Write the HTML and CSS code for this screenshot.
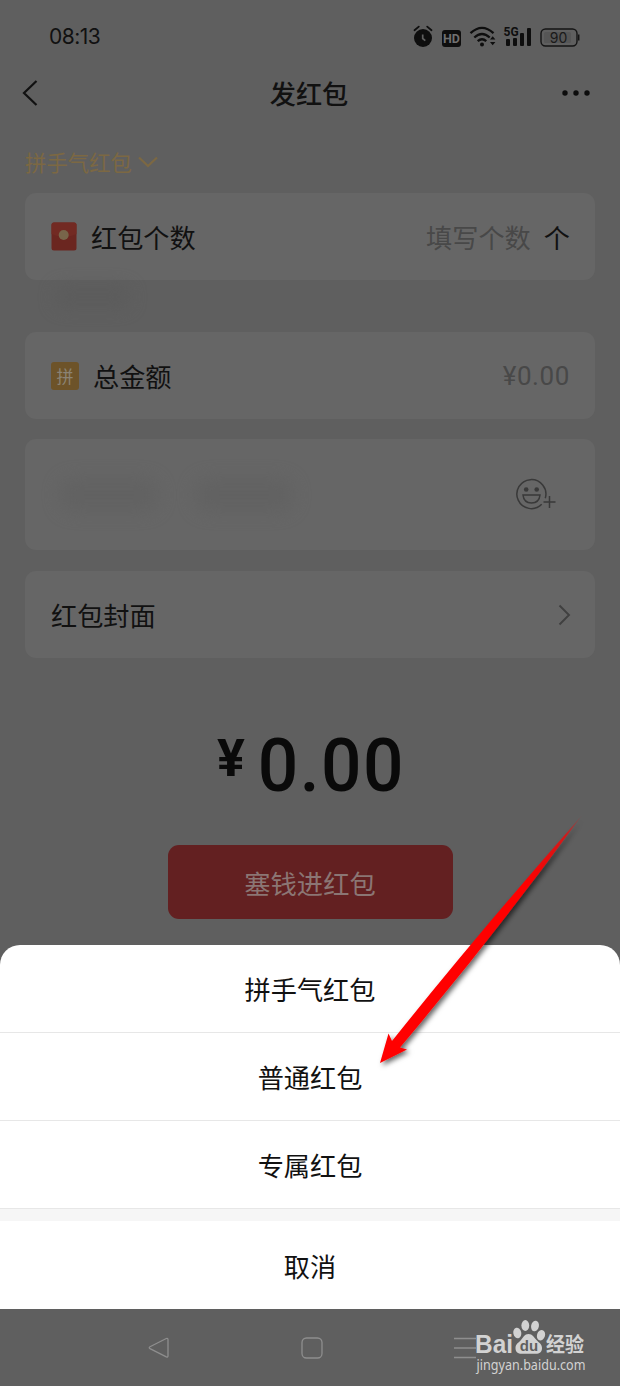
FILE: index.html
```html
<!DOCTYPE html>
<html lang="zh-CN">
<head>
<meta charset="utf-8">
<title>发红包</title>
<link rel="stylesheet" href="styles.css">
</head>
<body>
<div class="screen">
  <main class="page">
    <div class="status">
      <span class="time">08:13</span>
      <svg class="status-icons" width="170" height="26" viewBox="0 0 170 26">
        <g fill="#0e0e0e">
          <circle cx="13" cy="14" r="9"/>
          <path d="M4.5 6.2 8.8 2.6M21.5 6.2 17.200 2.600" stroke="#0e0e0e" stroke-width="1.8" stroke-linecap="round"/>
          <path d="M12.700 10.500v4l2.600 2.200" fill="none" stroke="#606060" stroke-width="1.700"/>
          <rect x="32" y="6" width="19" height="17" rx="3"/>
          <path d="M60.500 9.200Q72-1.500 83.500 9.200M64.300 13.500q7.700-7 15.400 0M67.700 17.200q4.300-3.800 8.600 0" fill="none" stroke="#0e0e0e" stroke-width="2.300"/>
          <circle cx="72" cy="20.500" r="2"/>
          <path d="M80 15.500l2.700-3.300 2.700 3.300zM80 18l2.700 3.300 2.700-3.300z"/>
          <rect x="96" y="15" width="4" height="7" rx="1"/>
          <rect x="103" y="14" width="4" height="8" rx="1"/>
          <rect x="110" y="9" width="4" height="13" rx="1"/>
          <rect x="117" y="4" width="4" height="18" rx="1"/>
        </g>
        <rect x="131" y="5" width="36" height="17" rx="4.500" fill="none" stroke="#141414" stroke-width="1.400"/>
        <rect x="134" y="8" width="27" height="11" rx="1.500" fill="#565656"/>
        <path d="M168.700 10.500v6" stroke="#141414" stroke-width="1.500"/>
        <text class="hd" x="41.500" y="18.800" text-anchor="middle">HD</text>
        <text class="five" x="93.500" y="12">5G</text>
        <text class="batt" x="148.500" y="18.600" text-anchor="middle">90</text>
      </svg>
    </div>
    <header class="nav">
      <svg width="18" height="28" viewBox="0 0 18 28"><path d="M15.500 2 3 14 15.500 26" fill="none" stroke="#111" stroke-width="2.200"/></svg>
      <h1 class="title">发红包</h1>
      <svg width="30" height="8" viewBox="0 0 30 8" fill="#0c0c0c"><circle cx="4" cy="4" r="2.700"/><circle cx="15" cy="4" r="2.700"/><circle cx="26" cy="4" r="2.700"/></svg>
    </header>
    <div class="kind">
      <span>拼手气红包</span>
      <svg width="20" height="12" viewBox="0 0 20 12"><path d="M1 1.500 10 10 19 1.500" fill="none" stroke="#7c6843" stroke-width="2.200"/></svg>
    </div>
    <section class="card count">
      <svg width="26" height="29" viewBox="0 0 26 29"><rect x=".5" y=".5" width="25" height="28" rx="2.500" fill="#6b2620"/><path d="M.5 12V3Q.5.500 3 .5h20q2.500 0 2.500 2.500v9q-12.500 6-25 0z" fill="#722a23"/><circle cx="12.700" cy="13" r="5" fill="#78654a"/></svg>
      <span class="label">红包个数</span>
      <span class="hint">填写个数</span>
      <span class="unit">个</span>
    </section>
    <div class="smudge smudge-small"></div>
    <section class="card total">
      <span class="badge">拼</span>
      <span class="label">总金额</span>
      <span class="hint money">¥0.00</span>
    </section>
    <section class="card message">
      <div class="smudges"><div class="smudge"></div><div class="smudge"></div></div>
      <svg width="42" height="34" viewBox="0 0 42 34" fill="none" stroke="#393939" stroke-width="1.500"><path d="M30.300 20.200A14.500 14.500 0 1 0 26.700 26.300"/><circle cx="11.200" cy="11.500" r="2.300" fill="#393939" stroke="none"/><circle cx="21.700" cy="11.500" r="2.300" fill="#393939" stroke="none"/><path d="M8 17h17q-.8 8-8.500 8T8 17zM34.500 18v12M28.500 24h12"/></svg>
    </section>
    <section class="card cover">
      <span class="label">红包封面</span>
      <svg width="13" height="22" viewBox="0 0 13 22"><path d="M1.500 1.500 11 11 1.500 20.500" fill="none" stroke="#404040" stroke-width="1.900"/></svg>
    </section>
    <div class="amount"><span class="yen">¥</span><span class="digits">0.00</span></div>
    <div class="pay">塞钱进红包</div>
  </main>
  <section class="sheet">
    <div class="option">拼手气红包</div>
    <div class="option">普通红包</div>
    <div class="option">专属红包</div>
    <div class="gap"></div>
    <div class="option cancel">取消</div>
  </section>
  <footer class="keys">
    <svg width="22" height="22" viewBox="0 0 22 22"><path d="M18.300 1.500 2 9.700q-1.500 1 0 2l16.300 8.200q1.700.6 1.700-1.200V2.700q0-1.700-1.700-1.200z" fill="none" stroke="#8e8e8e" stroke-width="1.300"/></svg>
    <svg width="22" height="22" viewBox="0 0 22 22"><rect x="1" y="1" width="20" height="20" rx="4.500" fill="none" stroke="#8e8e8e" stroke-width="1.300"/></svg>
    <svg width="22" height="22" viewBox="0 0 22 22"><path d="M0 1.500h22M0 11h22M0 20.500h22" stroke="#8e8e8e" stroke-width="1.400"/></svg>
  </footer>
  <svg class="arrow" width="240" height="280" viewBox="0 0 240 280">
    <defs>
      <linearGradient id="fade" gradientUnits="userSpaceOnUse" x1="222" y1="14" x2="165" y2="84"><stop offset="0" stop-color="#f00" stop-opacity="0"/><stop offset=".3" stop-color="#f00" stop-opacity=".7"/><stop offset="1" stop-color="#f00"/></linearGradient>
      <filter id="shade" x="-20%" y="-20%" width="140%" height="140%"><feDropShadow dx="2.500" dy="2.500" stdDeviation="2.500" flood-color="#000" flood-opacity=".6"/></filter>
    </defs>
    <path d="M20 263 28.500 233.500 32 241 Q120 131 223 14 Q134 136 40 247.500 L47 249.500Z" fill="url(#fade)" filter="url(#shade)"/>
  </svg>
  <svg class="mark" width="124" height="60" viewBox="0 0 124 60" fill="#d2d2d2">
    <text class="bai" x="1" y="36" textLength="38" lengthAdjust="spacingAndGlyphs">Bai</text>
    <ellipse cx="43.300" cy="16" rx="4" ry="5.300" transform="rotate(-12 43.300 16)"/>
    <ellipse cx="51.300" cy="8.500" rx="3.900" ry="5.400"/>
    <ellipse cx="61" cy="9" rx="3.900" ry="5.400" transform="rotate(12 61 9)"/>
    <ellipse cx="67" cy="18.300" rx="4" ry="5.300" transform="rotate(18 67 18.300)"/>
    <path d="M54.500 17c4 0 5.500 3.300 8 6 2.500 2.800 5.500 4.200 5.500 8 0 4.300-3 6-6.500 5.800H48c-3.500.2-6.500-1.500-6.500-5.800 0-3.800 3-5.200 5.500-8 2.300-2.700 3.500-6 7.500-6z"/>
    <text class="du" x="55" y="34" text-anchor="middle">du</text>
    <text class="jing" x="72" y="35" textLength="38" lengthAdjust="spacingAndGlyphs">经验</text>
    <text class="site" x="2.500" y="52.500" textLength="109" lengthAdjust="spacingAndGlyphs">jingyan.baidu.com</text>
  </svg>
</div>
</body>
</html>
```
FILE: styles.css
```css
* { box-sizing: border-box; }
body { margin: 0; background: #5f5f5f; font-family: "Noto Sans CJK SC", sans-serif; }
svg { display: block; flex: none; }
.screen { position: relative; width: 620px; height: 1386px; overflow: hidden; background: #5f5f5f; color: #111; display: flex; flex-direction: column; }
.page { height: 945px; padding: 0 25px; display: flex; flex-direction: column; }
.status { height: 62px; padding: 24px 15px 0 24px; display: flex; justify-content: space-between; }
.time { font: 21px/26px Inter, sans-serif; letter-spacing: -.5px; }
.hd { font: 700 12.500px Roboto, sans-serif; fill: #707070; }
.five { font: 700 12px Roboto, sans-serif; fill: #0e0e0e; }
.batt { font: 14px Inter, sans-serif; fill: #1a1a1a; }
.nav { height: 62px; margin: 0 4px 0 -4px; display: flex; align-items: center; justify-content: space-between; }
.title { margin: 0 0 0 18px; font-size: 26.200px; line-height: 40px; font-weight: 500; }
.kind { height: 69px; padding-top: 7px; display: flex; align-items: center; gap: 6px; font-size: 21.400px; line-height: 30px; color: #7c6843; }
.card { flex: none; height: 87px; padding: 0 25px 0 26px; border-radius: 11px; background: #666; display: flex; align-items: center; font-size: 26.200px; line-height: 38px; }
.count .label, .total .label { margin-left: 14px; }
.hint { margin-left: auto; color: #484848; }
.unit { margin-left: 13px; }
.total { margin-top: 18px; }
.badge { width: 28px; height: 28px; border-radius: 3px; background: #6d5329; color: #8b8374; font-size: 17px; line-height: 27px; text-align: center; }
.money { font-family: Roboto, sans-serif; font-size: 26px; letter-spacing: .6px; }
.smudge { width: 100px; height: 34px; border-radius: 17px; background: #626262; filter: blur(8px); }
.smudge-small { flex: none; width: 75px; height: 22px; margin: 6px 0 6px 30px; background: #5c5c5c; }
.message { height: 111px; margin-top: 20px; padding-right: 38px; justify-content: space-between; }
.smudges { display: flex; gap: 35px; padding-left: 8px; }
.cover { margin-top: 21px; padding-right: 24px; justify-content: space-between; }
.amount { height: 187px; padding: 62px 0 0 2px; display: flex; align-items: flex-start; justify-content: center; gap: 5px; font-family: Roboto, sans-serif; font-weight: 500; color: #0a0a0a; }
.yen { font-size: 52px; line-height: 78px; font-weight: 700; }
.digits { font-size: 75px; line-height: 90px; letter-spacing: 1.600px; transform: scaleX(.95); transform-origin: right; }
.pay { align-self: center; width: 285px; height: 74px; border-radius: 11px; background: #632021; color: #8b7674; font-size: 26.300px; line-height: 75px; text-align: center; }
.sheet { height: 364px; background: #fff; border-radius: 20px 20px 0 0; overflow: hidden; }
.option { height: 88px; border-bottom: 1px solid #e7e7e7; font-size: 26.200px; line-height: 88px; text-align: center; }
.gap { height: 12px; background: #f6f6f6; }
.cancel { border: 0; line-height: 90px; }
.keys { height: 77px; padding: 0 144px 0 148px; display: flex; align-items: center; justify-content: space-between; }
.arrow { position: absolute; left: 360px; top: 800px; }
.mark { position: absolute; left: 474px; top: 1317px; }
.bai { font: 700 25px "Liberation Sans", sans-serif; }
.du { font: 700 15px "Liberation Sans", sans-serif; fill: #5f5f5f; }
.jing { font: 700 20px "Noto Sans CJK SC", sans-serif; }
.site { font: 13.500px "Noto Sans", sans-serif; }
```
